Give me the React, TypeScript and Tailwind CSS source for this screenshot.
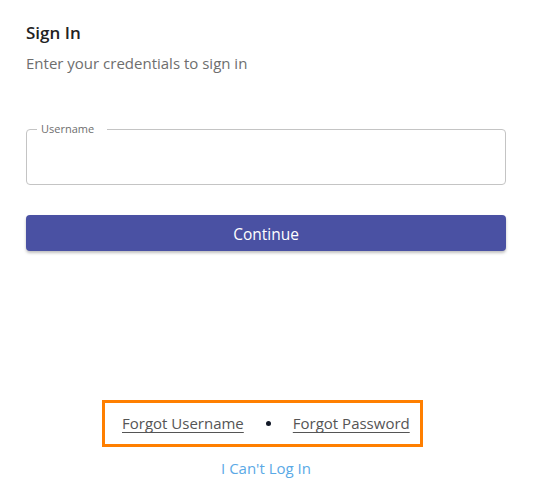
import React from "react";

const App = () => {
  return (
    <div className="w-[533px] h-[499px] bg-white px-[26px] pt-[22px] flex flex-col font-['Open_Sans',sans-serif]">
      <h1 className="text-[17px] leading-[22px] font-semibold text-[#222222]">Sign In</h1>
      <p className="mt-[9px] text-[15px] leading-[20px] text-[#6e6e6e]">
        Enter your credentials to sign in
      </p>

      <div className="relative mt-[56px] h-[56px] w-[480px] border border-[#c4c4c4] rounded-[4px]">
        <span className="absolute -top-[8px] left-[10px] bg-white pl-[4px] pr-[13px] text-[11px] leading-[14px] text-[#6e6e6e]">
          Username
        </span>
      </div>

      <button className="mt-[30px] h-[36px] w-[480px] rounded-[4px] bg-[#4a51a3] text-white text-[15.5px] leading-[38px] shadow-[0_2px_3px_rgba(0,0,0,0.25)]">
        Continue
      </button>

      <div className="mt-auto mb-[21px] w-[480px] flex flex-col items-center">
        <div className="self-start ml-[76px] w-[321px] h-[47px] border-[3px] border-[#ff7f00] flex items-center pl-[17px] gap-[22px] text-[15px] text-[#555555]">
          <a className="underline underline-offset-[3px] decoration-[#555555]">Forgot Username</a>
          <span className="w-[5px] h-[5px] rounded-full bg-[#111827]" />
          <a className="underline underline-offset-[3px] decoration-[#555555]">Forgot Password</a>
        </div>
        <a className="mt-[11px] text-[15px] leading-[20px] text-[#5aa9e6]">I Can't Log In</a>
      </div>
    </div>
  );
};

export default App;
